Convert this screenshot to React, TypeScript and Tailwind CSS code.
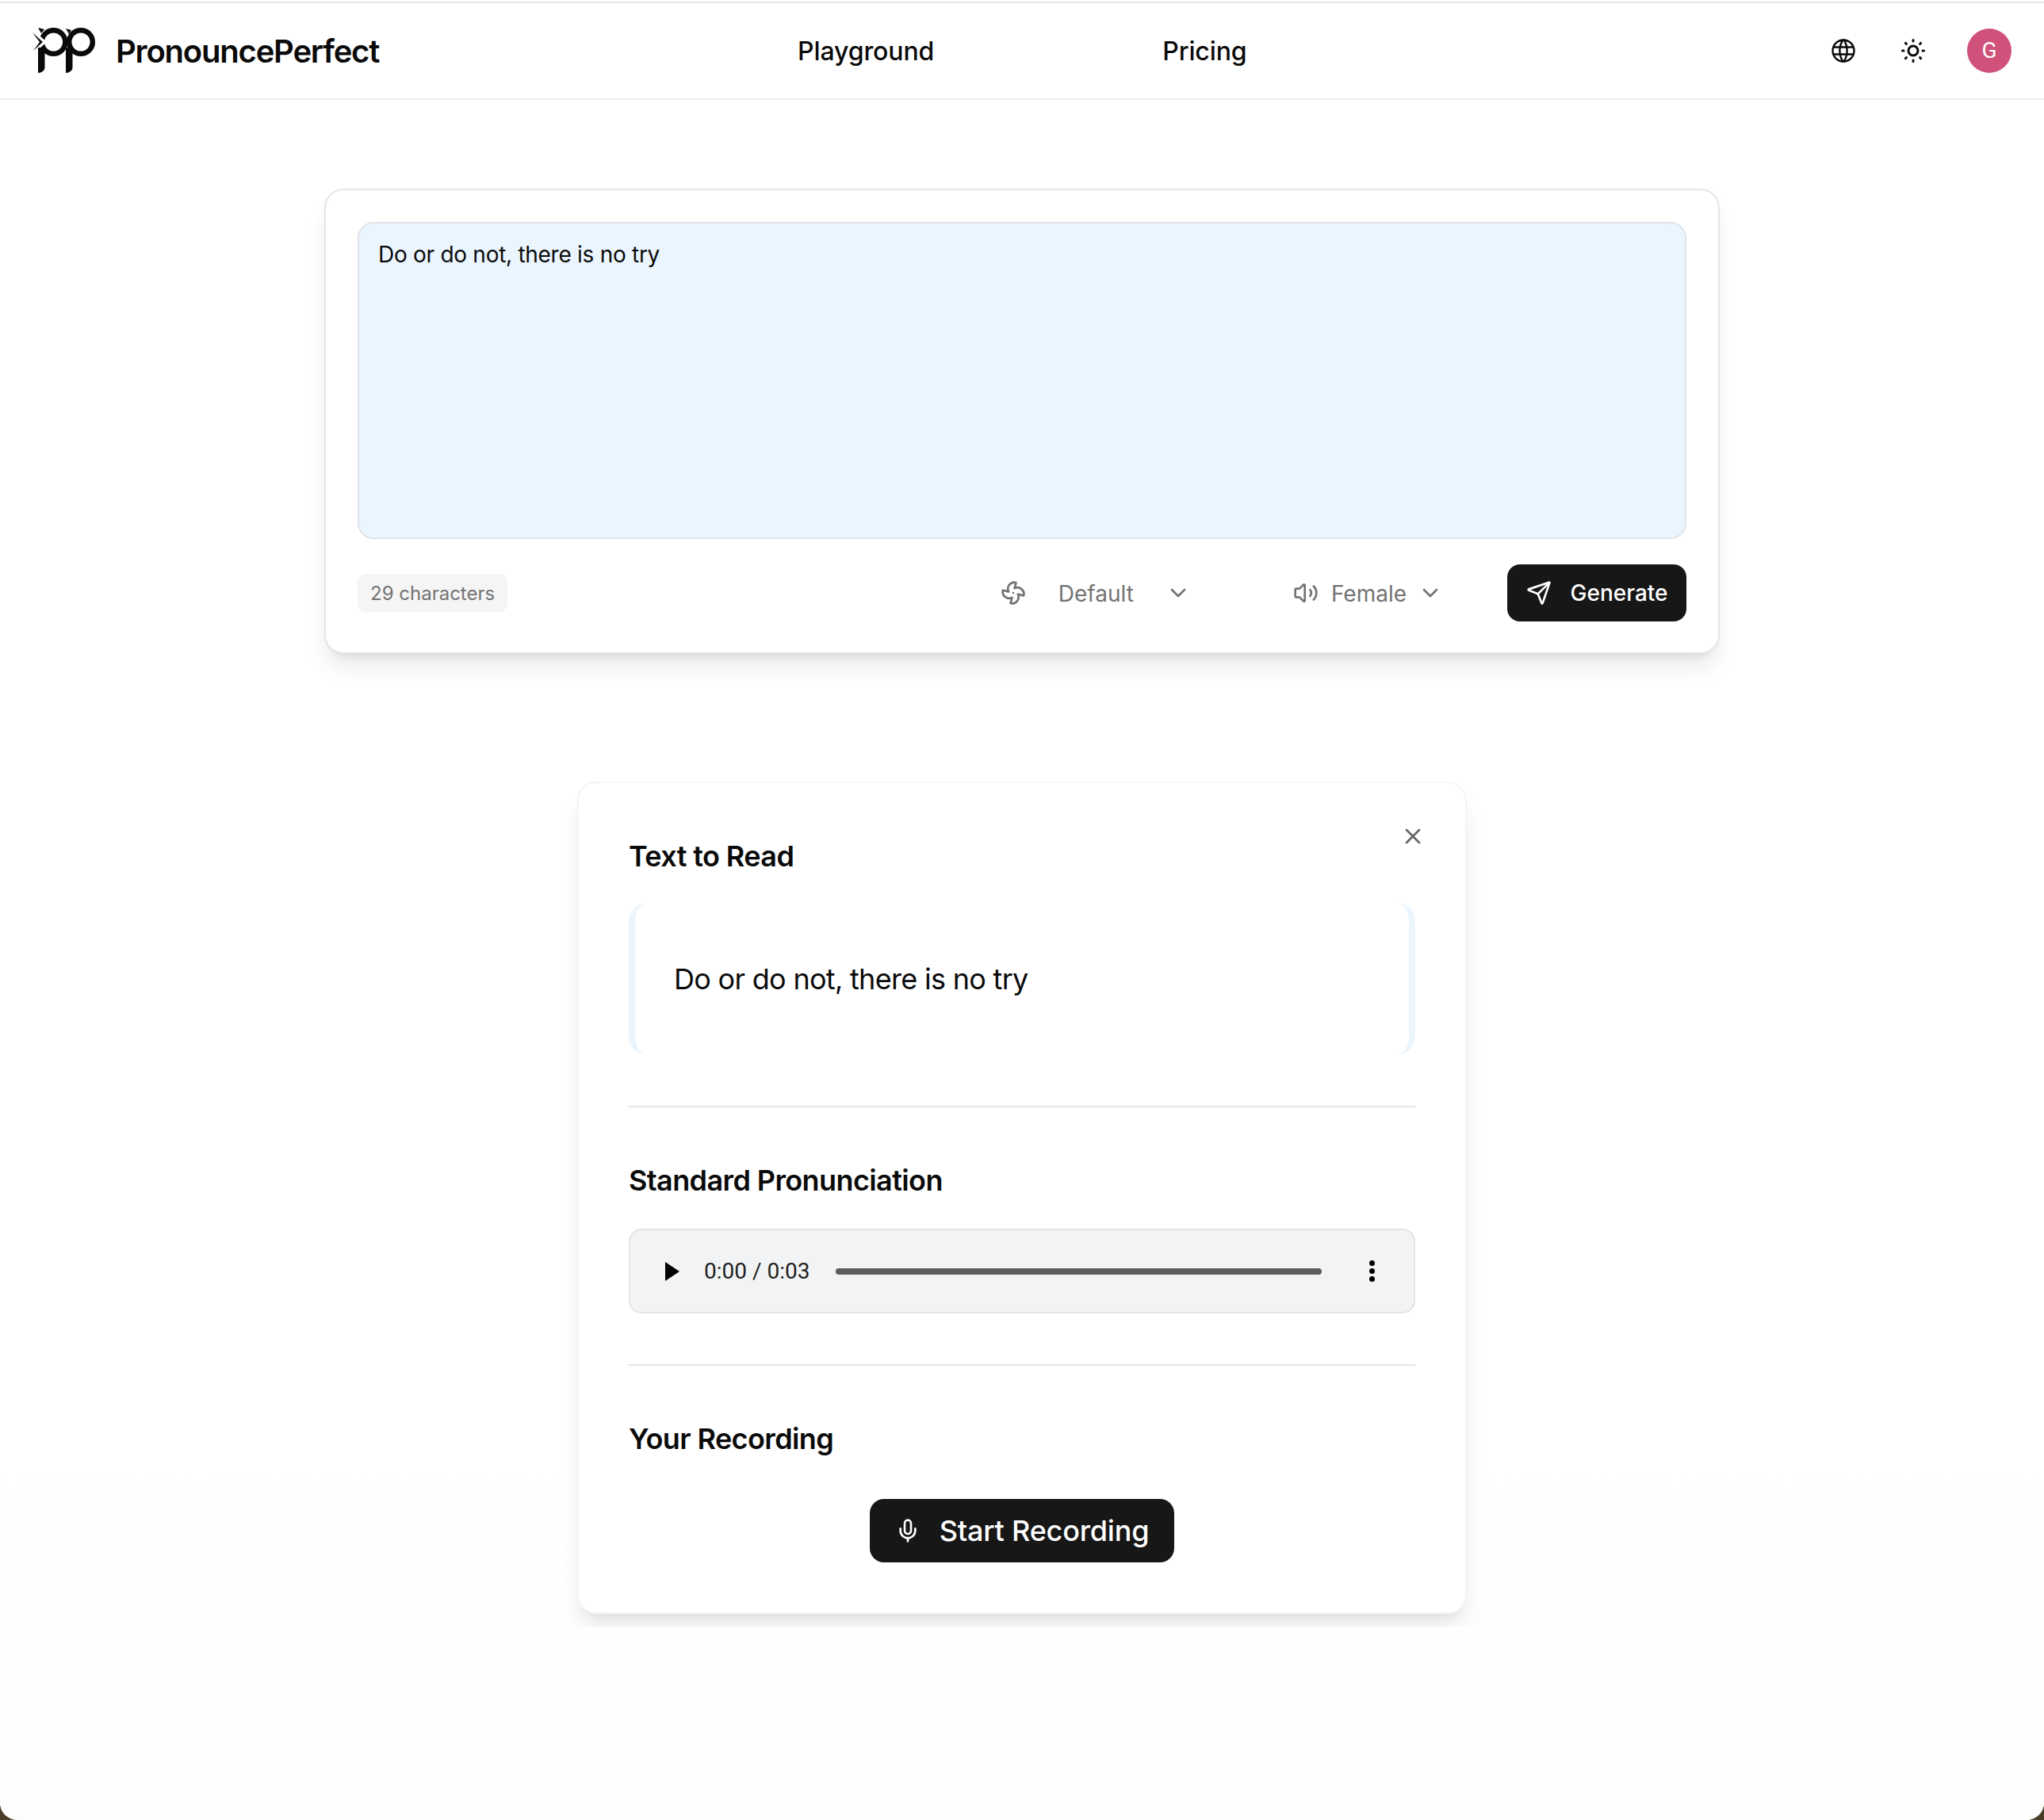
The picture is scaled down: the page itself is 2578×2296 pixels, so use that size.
import React from 'react';
import { Fan, Volume2, ChevronDown, X, Mic, Send } from 'lucide-react';
import { TbWorld, TbSun } from 'react-icons/tb';

const Logo = () => (
  <svg width="80" height="58" viewBox="0 0 80 58" fill="none" className="shrink-0">
    <circle cx="26.500" cy="18" r="14.800" stroke="#0a0a0a" strokeWidth="6.500" />
    <circle cx="61" cy="18" r="14.800" stroke="#0a0a0a" strokeWidth="6.500" />
    <path d="M0 2L18 18L0 34z" fill="#ffffff" />
    <path d="M7 25h8.500v25c0 4-4 7-8.500 7z" fill="#0a0a0a" />
    <path d="M42 25h8.500v25c0 4-4 7-8.500 7z" fill="#0a0a0a" />
    <path d="M42 1l7 2-3 5z" fill="#0a0a0a" />
    <path d="M7 0l8 2-4 5z" fill="#0a0a0a" />
    <path d="M0 6L13 18L1 29L9 18z" fill="#0a0a0a" />
  </svg>
);

const Heading = ({ children }: { children: React.ReactNode }) => (
  <h2 className="text-[36px] leading-[44px] font-semibold text-[#0a0a0a] tracking-[-0.6px]">{children}</h2>
);

const App: React.FC = () => {
  return (
    <div className="h-[2296px] bg-[#4a3c28] overflow-hidden font-['Inter',sans-serif]">
      <div className="h-full bg-white rounded-b-[22px] overflow-hidden flex flex-col">
        <header className="mt-[2px] h-[124px] shrink-0 border-t-2 border-b-2 border-t-[#e5e5e5] border-b-[#f0f0f0] flex items-center pl-[41px] pr-[41px] relative">
          <div className="flex items-center gap-[25px] w-[965px]">
            <Logo />
            <span className="pt-[2px] text-[40px] font-semibold text-[#0a0a0a] tracking-[-1.2px]">PronouncePerfect</span>
          </div>
          <nav className="pt-[2px] flex items-center gap-[288px] text-[32px] font-medium text-[#0a0a0a] tracking-[-0.1px]">
            <span>Playground</span>
            <span>Pricing</span>
          </nav>
          <div className="ml-auto flex items-center">
            <TbWorld strokeWidth={1.6} className="w-[36px] h-[36px] text-[#0a0a0a]" />
            <TbSun className="w-[36px] h-[36px] text-[#0a0a0a] ml-[52px]" />
            <div className="w-[56px] h-[56px] ml-[50px] rounded-full bg-[#d0527a] text-white flex items-center justify-center text-[28px] font-['Roboto',sans-serif]">G</div>
          </div>
        </header>

        <main className="flex-1 bg-gradient-to-b from-white via-white via-80% to-[#fdfdfd] flex flex-col items-center">
          <section className="mt-[112px] w-[1760px] h-[587px] bg-white border-2 border-[#e5e5e5] rounded-[24px] shadow-[0_20px_30px_-6px_rgba(0,0,0,0.1),0_8px_12px_-8px_rgba(0,0,0,0.1)] pt-[40px] px-[40px] flex flex-col">
            <div className="w-[1676px] h-[400px] bg-[#ebf5fe] border-2 border-[#e0e4e8] rounded-[20px] px-[24px] pt-[19px] text-[28px] leading-[40px] text-[#0a0a0a] tracking-[-0.28px]">
              Do or do not, there is no try
            </div>
            <div className="mt-[32px] flex items-center text-[28px] text-[#737373]">
              <span className="h-[48px] pt-[2px] px-[16px] bg-[#f5f5f5] rounded-[10px] flex items-center text-[24px]">29 characters</span>
              <div className="ml-auto flex items-center">
                <Fan className="w-[32px] h-[32px]" strokeWidth={2} />
                <span className="ml-[41px] pt-[2px]">Default</span>
                <ChevronDown className="ml-[40px] w-[32px] h-[32px]" strokeWidth={2} />
                <Volume2 className="ml-[129px] w-[32px] h-[32px]" strokeWidth={2} />
                <span className="ml-[16px] pt-[2px]">Female</span>
                <ChevronDown className="ml-[14px] w-[32px] h-[32px]" strokeWidth={2} />
                <button className="ml-[81px] w-[226px] h-[72px] bg-[#171717] text-white rounded-[16px] flex items-center justify-center gap-[24px] font-medium">
                  <Send className="w-[32px] h-[32px]" strokeWidth={2} />
                  Generate
                </button>
              </div>
            </div>
          </section>

          <div className="mt-[161px] w-[1240px] h-[1066px] overflow-hidden flex justify-center">
            <section className="relative w-[1122px] h-[1050px] bg-white border-2 border-[#f5f5f5] rounded-[24px] shadow-[0_20px_30px_-6px_rgba(0,0,0,0.1),0_8px_12px_-8px_rgba(0,0,0,0.08)] px-[63px] pt-[70px]">
              <X className="absolute right-[50px] top-[51px] w-[32px] h-[32px] text-[#666666]" strokeWidth={2} />
              <Heading>Text to Read</Heading>
              <div className="mt-[37px] h-[192px] border-x-8 border-[#ebf5fe] rounded-[24px] pl-[49px] flex items-center text-[36px] text-[#0a0a0a] tracking-[-0.7px]">
                Do or do not, there is no try
              </div>
              <div className="mt-[64px] h-[2px] bg-[#e5e5e5]" />
              <div className="mt-[70px]"><Heading>Standard Pronunciation</Heading></div>
              <div className="mt-[39px] h-[107px] bg-[#f1f3f4] border-2 border-[#e3e4e6] rounded-[16px] flex items-center pl-[44px] pr-[49px]">
                <svg width="18" height="24" viewBox="0 0 18 24" className="shrink-0"><path d="M0 0l18 12L0 24z" fill="#000000" /></svg>
                <span className="ml-[31px] text-[28px] text-[#1f1f1f] font-['Roboto',sans-serif] whitespace-nowrap">0:00 / 0:03</span>
                <div className="ml-[33px] flex-1 h-[8px] rounded-full bg-[#5c5c5c]" />
                <div className="ml-[60px] flex flex-col gap-[3px]">
                  <span className="w-[7px] h-[7px] rounded-full bg-black" />
                  <span className="w-[7px] h-[7px] rounded-full bg-black" />
                  <span className="w-[7px] h-[7px] rounded-full bg-black" />
                </div>
              </div>
              <div className="mt-[64px] h-[2px] bg-[#e5e5e5]" />
              <div className="mt-[70px]"><Heading>Your Recording</Heading></div>
              <div className="mt-[54px] flex justify-center">
                <button className="w-[384px] h-[80px] bg-[#171717] text-white rounded-[18px] flex items-center justify-center gap-[24px] text-[36px] font-medium tracking-[-0.2px]">
                  <Mic className="w-[32px] h-[32px]" strokeWidth={2} />
                  Start Recording
                </button>
              </div>
            </section>
          </div>
        </main>
      </div>
    </div>
  );
};

export default App;
